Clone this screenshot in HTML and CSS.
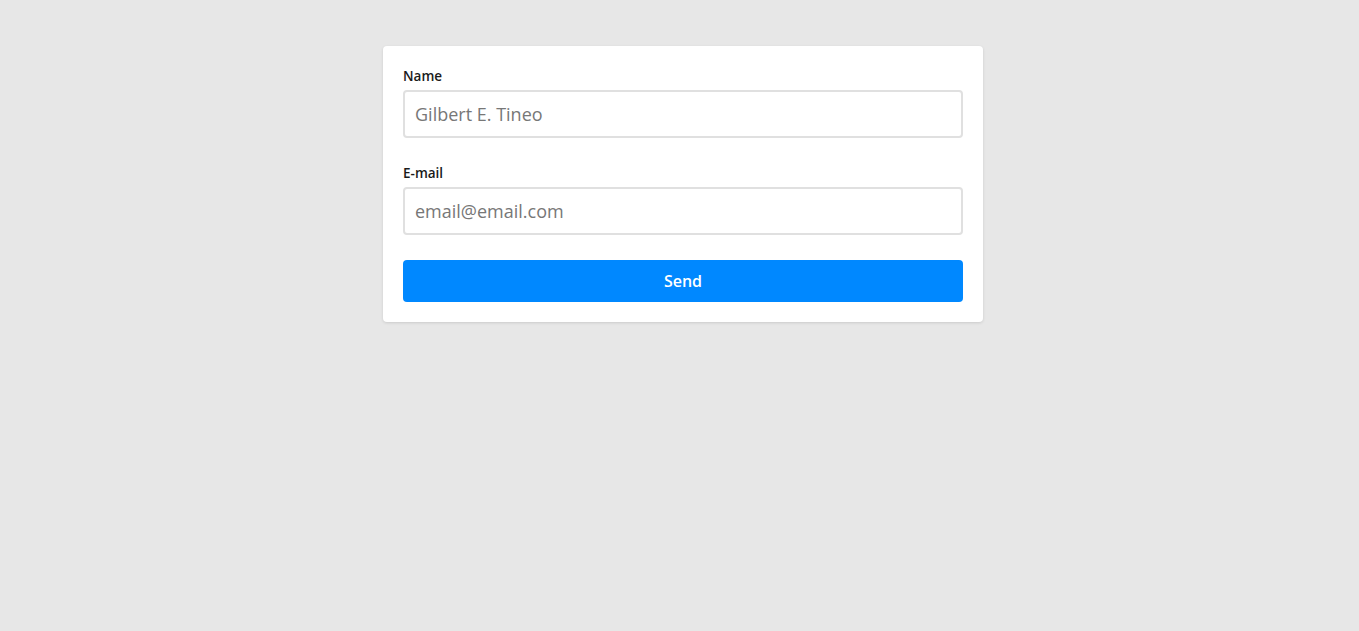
FILE: index.html
```html
<!DOCTYPE html>
<html lang="en">
<head>
<meta charset="utf-8">
<title>Form</title>
<link rel="stylesheet" href="styles.css">
</head>
<body>
<form class="card">
  <div class="field">
    <label class="label" for="name">Name</label>
    <input class="input" id="name" type="text" placeholder="Gilbert E. Tineo">
  </div>
  <div class="field">
    <label class="label" for="email">E-mail</label>
    <input class="input" id="email" type="email" placeholder="email@email.com">
  </div>
  <button class="button" type="button">Send</button>
</form>
</body>
</html>
```
FILE: styles.css
```css
* { box-sizing: border-box; }
html, body { margin: 0; padding: 0; }
body {
  background: #e7e7e7;
  font-family: "Open Sans", "Liberation Sans", sans-serif;
  min-height: 631px;
  padding: 46px 0 0 7px;
}
.card {
  width: 600px;
  margin: 0 auto;
  background: #fff;
  border-radius: 4px;
  padding: 20px;
  box-shadow: 0 1px 3px rgba(0,0,0,0.12);
  display: flex;
  flex-direction: column;
}
.field {
  display: flex;
  flex-direction: column;
  margin-bottom: 25px;
}
.label {
  font-size: 13.5px;
  line-height: 20px;
  font-weight: 600;
  color: #1a1a1a;
  margin-bottom: 4px;
}
.input {
  height: 48px;
  border: 2px solid #e0e0e0;
  border-radius: 4px;
  padding: 0 10px;
  font-family: inherit;
  font-size: 18px;
  color: #333;
  outline: none;
}
.input::placeholder { color: #777; }
.button {
  height: 42px;
  border: 0;
  border-radius: 4px;
  background: #0088ff;
  color: #fff;
  font-family: inherit;
  font-size: 16px;
  font-weight: 600;
}
```
